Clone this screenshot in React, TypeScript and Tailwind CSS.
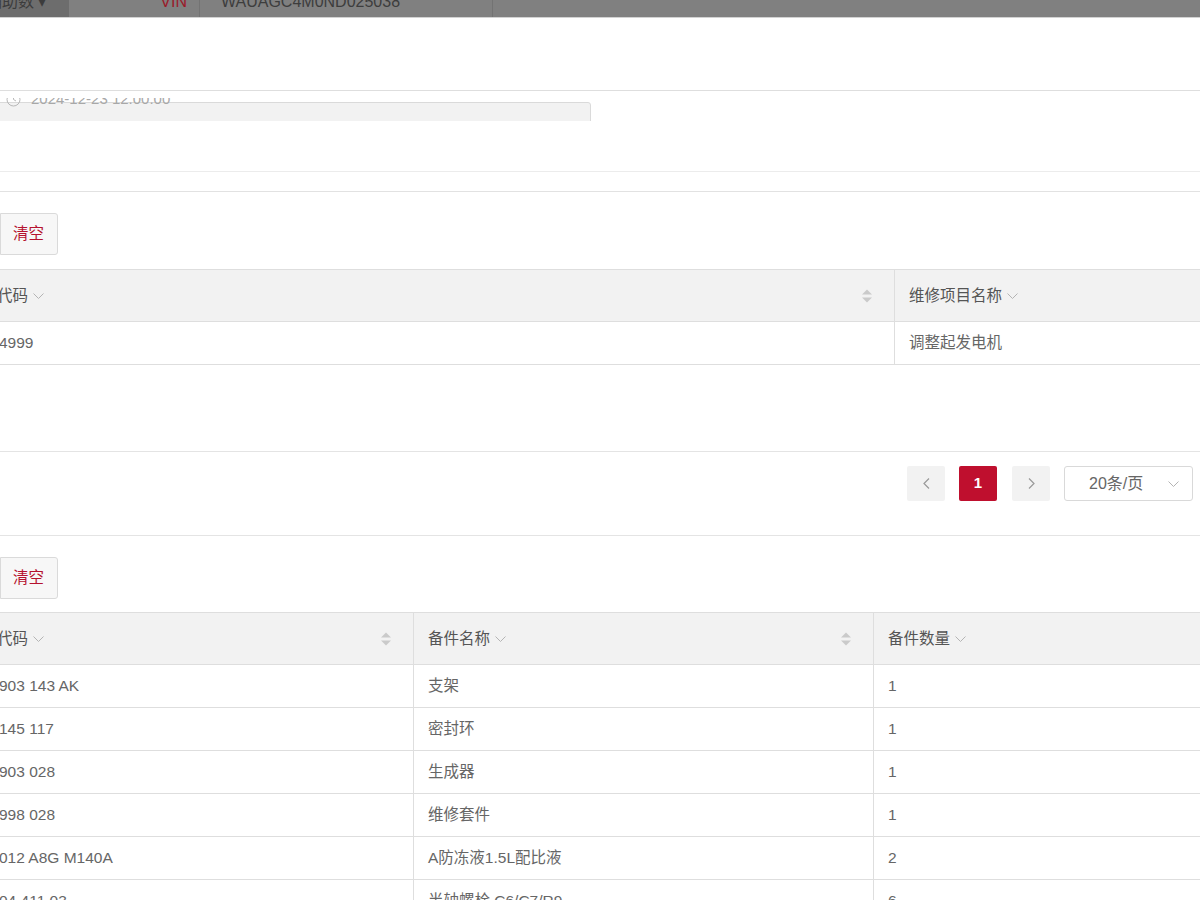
import React from "react";

const Chev = () => (
  <svg width="11" height="7" viewBox="0 0 11 7" className="ml-[5px] mt-[2px] shrink-0">
    <polyline points="0.5,0.5 5.5,5.5 10.5,0.5" fill="none" stroke="#b4b4b4" strokeWidth="1" />
  </svg>
);

const Sort = () => (
  <svg width="12" height="16" viewBox="0 0 12 16" className="shrink-0">
    <path d="M1 6.5 L6 1.5 L11 6.5Z" fill="#cacaca" />
    <path d="M1 9.5 L6 14.5 L11 9.5Z" fill="#cacaca" />
  </svg>
);

const ClearButton = () => (
  <div className="flex h-[42px] w-[58px] items-center justify-end rounded-r-[3px] border border-[#dadada] bg-[#f7f7f7] pr-[13px] text-[#b5122f]">
    <span>清空</span>
  </div>
);

const parts: [string, string, string][] = [
  ["903 143 AK", "支架", "1"],
  ["145 117", "密封环", "1"],
  ["903 028", "生成器", "1"],
  ["998 028", "维修套件", "1"],
  ["012 A8G M140A", "A防冻液1.5L配比液", "2"],
  ["04 411 03", "半轴螺栓 C6/C7/R9", "6"],
  ["105 366", "螺母", "4"],
];

export default function App() {
  return (
    <div className="w-[1200px] overflow-hidden bg-white font-['Liberation_Sans','Noto_Sans_CJK_SC',sans-serif] text-[15.5px] text-[#666]">
      {/* dimmed top bar */}
      <div className="h-[18px] overflow-hidden border-b border-[#d2d2d2] bg-[#808080]">
        <div className="-mt-[13px] flex h-[30px] items-stretch text-[16px]">
          <div className="flex w-[69px] items-center overflow-hidden bg-[#6d6d6d] text-[#3c3c3c]">
            <span className="-ml-[14px] whitespace-nowrap">辅助数 ▾</span>
          </div>
          <div className="flex w-[131px] items-center justify-end border-r border-[#737373] pr-[12px] text-[#9a1b2a]">
            VIN
          </div>
          <div className="flex w-[293px] items-center border-r border-[#737373] pl-[21px] text-[#3d3d3d]">
            WAUAGC4M0ND025038
          </div>
          <div className="flex-1" />
        </div>
      </div>

      {/* blank section */}
      <div className="h-[72px]" />

      {/* clipped date input */}
      <div className="border-t border-[#dedede] pt-[7px]">
        <div className="relative h-[23px] overflow-hidden">
          <div className="absolute -left-[10px] top-[4px] h-[30px] w-[601px] rounded-[3px] border border-[#dadada] bg-[#f2f2f2]" />
          <div className="absolute left-[6px] -top-[7px] flex h-[16px] items-center text-[15px] text-[#a8a8a8]">
            <svg width="15" height="15" viewBox="0 0 15 15" className="mr-[10px]">
              <circle cx="7.5" cy="7.5" r="6.5" fill="none" stroke="#b8b8b8" strokeWidth="1" />
              <polyline points="7.5,3.5 7.5,7.5 10,9" fill="none" stroke="#b8b8b8" strokeWidth="1" />
            </svg>
            2024-12-23 12:00:00
          </div>
        </div>
      </div>

      <div className="h-[50px]" />
      <div className="h-[20px] border-t border-[#ececec]" />
      <div className="border-t border-[#e2e2e2]" />

      {/* table 1 */}
      <div className="pt-[21px]">
        <div className="flex">
          <ClearButton />
        </div>
        <div className="mt-[14px] border-t border-[#dedede]">
          <div className="grid h-[52px] grid-cols-[894px_1fr] border-b border-[#dedede] bg-[#f2f2f2] text-[#555]">
            <div className="flex items-center justify-between overflow-hidden pr-[21px]">
              <div className="flex items-center">
                <span className="-ml-[65px] whitespace-nowrap">维修项目代码</span>
                <Chev />
              </div>
              <Sort />
            </div>
            <div className="flex items-center border-l border-[#dedede] pl-[14px]">
              维修项目名称
              <Chev />
            </div>
          </div>
          <div className="grid h-[43px] grid-cols-[894px_1fr] border-b border-[#dedede]">
            <div className="flex items-center">
              <span className="-ml-[1px]">4999</span>
            </div>
            <div className="flex items-center border-l border-[#dedede] pl-[14px]">调整起发电机</div>
          </div>
        </div>
      </div>

      <div className="h-[86px]" />
      <div className="border-t border-[#e4e4e4]" />

      {/* pagination */}
      <div className="flex h-[83px] items-start justify-end pr-[7px] pt-[14px]">
        <div className="flex h-[35px] w-[38px] items-center justify-center rounded-[2px] bg-[#f2f2f2]">
          <svg width="7" height="11" viewBox="0 0 7 11">
            <polyline points="6,0.5 1,5.5 6,10.5" fill="none" stroke="#9a9a9a" strokeWidth="1.2" />
          </svg>
        </div>
        <div className="ml-[14px] flex h-[35px] w-[38px] items-center justify-center rounded-[2px] bg-[#bf0f2e] text-[15px] font-bold text-white">
          1
        </div>
        <div className="ml-[15px] flex h-[35px] w-[38px] items-center justify-center rounded-[2px] bg-[#f2f2f2]">
          <svg width="7" height="11" viewBox="0 0 7 11">
            <polyline points="1,0.5 6,5.5 1,10.5" fill="none" stroke="#9a9a9a" strokeWidth="1.2" />
          </svg>
        </div>
        <div className="ml-[14px] flex h-[35px] w-[129px] items-center justify-between rounded-[3px] border border-[#d9d9d9] pl-[24px] pr-[13px] text-[16px] text-[#666]">
          <span>20条/页</span>
          <Chev />
        </div>
      </div>
      <div className="border-t border-[#e4e4e4]" />

      {/* table 2 */}
      <div className="pt-[21px]">
        <div className="flex">
          <ClearButton />
        </div>
        <div className="mt-[13px] border-t border-[#dedede]">
          <div className="grid h-[52px] grid-cols-[413px_460px_1fr] border-b border-[#dedede] bg-[#f2f2f2] text-[#555]">
            <div className="flex items-center justify-between overflow-hidden pr-[21px]">
              <div className="flex items-center">
                <span className="-ml-[65px] whitespace-nowrap">备件编号代码</span>
                <Chev />
              </div>
              <Sort />
            </div>
            <div className="flex items-center justify-between border-l border-[#dedede] pl-[14px] pr-[21px]">
              <div className="flex items-center">
                备件名称
                <Chev />
              </div>
              <Sort />
            </div>
            <div className="flex items-center border-l border-[#dedede] pl-[14px]">
              备件数量
              <Chev />
            </div>
          </div>
          {parts.map(([code, name, qty]) => (
            <div key={code} className="grid h-[43px] grid-cols-[413px_460px_1fr] border-b border-[#dedede]">
              <div className="flex items-center whitespace-nowrap">
                <span className="-ml-[1px]">{code}</span>
              </div>
              <div className="flex items-center border-l border-[#dedede] pl-[14px]">{name}</div>
              <div className="flex items-center border-l border-[#dedede] pl-[14px]">{qty}</div>
            </div>
          ))}
        </div>
      </div>
    </div>
  );
}
